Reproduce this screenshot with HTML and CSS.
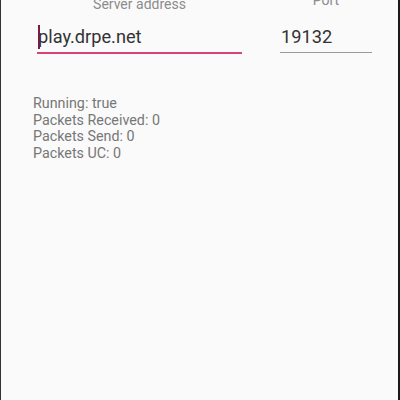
FILE: index.html
```html
<!DOCTYPE html>
<html lang="en">
<head>
    <meta charset="UTF-8">
    <meta name="viewport" content="width=device-width, initial-scale=1.0">
    <title>Proxy</title>
    <link rel="stylesheet" href="styles.css">
</head>
<body>
    <div class="screen">
        <div class="fields">
            <div class="field field-address">
                <div class="field-label">Server address</div>
                <div class="field-input active">
                    <span class="caret"></span>play.drpe.net
                </div>
            </div>
            <div class="field field-port">
                <div class="field-label">Port</div>
                <div class="field-input">19132</div>
            </div>
        </div>

        <div class="stats">
            <div>Running: true</div>
            <div>Packets Received: 0</div>
            <div>Packets Send: 0</div>
            <div>Packets UC: 0</div>
        </div>
    </div>
</body>
</html>
```

FILE: styles.css
```css
body {
    margin: 0;
    padding: 0;
    font-family: 'Roboto', 'Liberation Sans', sans-serif;
    background: #fafafa;
}
.screen {
    height: 400px;
    box-sizing: border-box;
    border-left: 1px solid #333;
    border-right: 2px solid #1a1a1a;
    background: #fafafa;
    overflow: hidden;
}
.fields {
    display: flex;
    margin-top: -4px;
    padding-left: 36px;
}
.field {
    display: flex;
    flex-direction: column;
}
.field-address {
    width: 205px;
}
.field-port {
    width: 92px;
    margin-left: 38px;
}
.field-label {
    text-align: center;
    font-size: 14px;
    line-height: 16px;
    color: #8c8c8c;
}
.field-input {
    position: relative;
    margin-top: 14px;
    padding: 0 0 4px 1px;
    font-size: 18.2px;
    line-height: 22px;
    color: #333;
    border-bottom: 1px solid #9a9a9a;
}
.field-port .field-label {
    margin-top: -4px;
}
.field-port .field-input {
    margin-top: 18px;
}
.field-input.active {
    border-bottom: 2px solid #d6437a;
}
.caret {
    position: absolute;
    left: 1px;
    top: -1px;
    width: 2px;
    height: 24px;
    background: #7a1c3e;
}
.stats {
    margin-top: 41px;
    padding-left: 32px;
    font-size: 14.3px;
    line-height: 16.67px;
    color: #777;
}
```
